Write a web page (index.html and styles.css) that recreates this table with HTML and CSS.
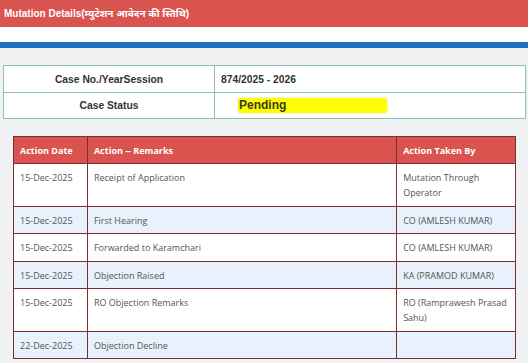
FILE: index.html
```html
<!DOCTYPE html>
<html>
<head>
<meta charset="utf-8">
<link rel="stylesheet" href="styles.css">
</head>
<body>
<div class="title-bar">Mutation Details(म्युटेशन आवेदन की स्तिथि)</div>
<div class="white-band"></div>
<div class="blue-band"></div>
<main class="content">
  <table class="info">
    <tr>
      <td class="label">Case No./YearSession</td>
      <td class="value">874/2025 - 2026</td>
    </tr>
    <tr>
      <td class="label">Case Status</td>
      <td class="value"><span class="status">Pending</span></td>
    </tr>
  </table>
  <table class="actions">
    <thead>
      <tr>
        <th class="c-date">Action Date</th>
        <th class="c-rem">Action -- Remarks</th>
        <th class="c-by">Action Taken By</th>
      </tr>
    </thead>
    <tbody>
      <tr><td>15-Dec-2025</td><td>Receipt of Application</td><td>Mutation Through Operator</td></tr>
      <tr class="alt"><td>15-Dec-2025</td><td>First Hearing</td><td>CO (AMLESH KUMAR)</td></tr>
      <tr><td>15-Dec-2025</td><td>Forwarded to Karamchari</td><td>CO (AMLESH KUMAR)</td></tr>
      <tr class="alt"><td>15-Dec-2025</td><td>Objection Raised</td><td>KA (PRAMOD KUMAR)</td></tr>
      <tr><td>15-Dec-2025</td><td>RO Objection Remarks</td><td>RO (Ramprawesh Prasad Sahu)</td></tr>
      <tr class="alt"><td>22-Dec-2025</td><td>Objection Decline</td><td></td></tr>
    </tbody>
  </table>
</main>
</body>
</html>
```
FILE: styles.css
```css
html, body {
  margin: 0;
  padding: 0;
}
body {
  background: #eff1f2;
  font-family: "Liberation Sans", "Noto Sans Devanagari", "Noto Sans", sans-serif;
  width: 528px;
  height: 363px;
  overflow: hidden;
}
.title-bar {
  height: 27px;
  background: #d9534f;
  color: #ffffff;
  font-weight: bold;
  font-size: 10px;
  line-height: 27px;
  padding-left: 4px;
  box-sizing: border-box;
}
.white-band {
  height: 15px;
  background: #ffffff;
}
.blue-band {
  height: 6px;
  background: #1f6fc1;
}
.content {
  padding: 17px 2px 0 3px;
}
.info {
  width: 523px;
  border-collapse: collapse;
  background: #ffffff;
  border: 1px solid #8fbcbd;
}
.info td {
  border: 1px solid #8fbcbd;
  font-size: 10.3px;
  font-weight: bold;
  color: #333333;
  padding: 0;
}
.info tr:first-child td {
  height: 26px;
}
.info tr:last-child td {
  height: 25px;
}
.info .label {
  width: 210px;
  text-align: center;
}
.info .value {
  padding-left: 6px;
}
.status {
  display: inline-block;
  width: 148px;
  height: 15px;
  line-height: 15px;
  margin-left: 17px;
  padding-left: 1px;
  background: #ffff00;
  border-radius: 3px;
  box-shadow: 0 0 2px #d8d870;
  font-size: 12px;
  color: #3a3a1a;
  vertical-align: middle;
}
.actions {
  margin: 17px 0 0 10px;
  width: 503px;
  border-collapse: collapse;
  font-family: "Open Sans", sans-serif;
  font-size: 9px;
  border: 1px solid #7a2e30;
}
.actions th {
  background: #d9534f;
  color: #ffffff;
  font-weight: bold;
  text-align: left;
  height: 26px;
  padding: 0 6px;
  border-left: 1px solid #7a2e30;
  border-right: 1px solid #7a2e30;
  border-bottom: 1px solid #7a2e30;
}
.actions td {
  border: 1px solid #7a2e30;
  color: #555555;
  padding: 6px 6px 5.5px;
  line-height: 15px;
  vertical-align: top;
  background: #ffffff;
}
.actions tr.alt td {
  background: #e8f1fc;
}
.actions .c-date {
  width: 61px;
}
.actions .c-rem {
  width: 297px;
}
.actions .c-by {
  width: 106px;
}
```
